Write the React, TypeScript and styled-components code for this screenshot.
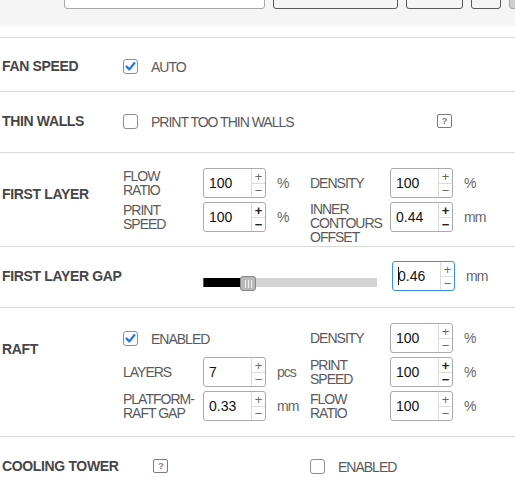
import React from 'react';
import styled, { createGlobalStyle } from 'styled-components';

const GlobalStyle = createGlobalStyle`
  html, body {
    margin: 0;
    padding: 0;
    background: #fff;
  }
  * {
    box-sizing: border-box;
  }
`;

// ANCHOR Page
const Page = styled.div`
  width: 515px;
  height: 478px;
  overflow: hidden;
  font-family: 'Liberation Sans', Arial, sans-serif;
  color: #666;
`;

// ANCHOR Toolbar (cut off at the top of the window)
const Toolbar = styled.div`
  height: 26px;
  background: #f5f5f5;
  display: flex;
  align-items: flex-start;
  gap: 8px;
  padding-left: 64px;
  overflow: hidden;
`;

type ToolVariant = 'field' | 'outline' | 'filled';

const ToolButton = styled.div<{ $w: number; $variant: ToolVariant }>`
  flex: none;
  width: ${(p) => p.$w}px;
  height: 30px;
  margin-top: -21px;
  border-radius: 3px;
  border: 1px solid
    ${(p) => (p.$variant === 'outline' ? '#5a5a5a' : '#a8a8a8')};
  background: ${(p) =>
    p.$variant === 'field'
      ? '#fff'
      : p.$variant === 'filled'
      ? '#cfcfcf'
      : '#f5f5f5'};
`;

// ANCHOR Sections
const List = styled.div`
  margin-top: 11px;
  border-top: 1px solid #d9d9d9;
`;

const Section = styled.div<{ $pt: number; $pb: number }>`
  display: flex;
  align-items: flex-start;
  padding: ${(p) => p.$pt}px 0 ${(p) => p.$pb}px;
  border-bottom: 1px solid #d9d9d9;
`;

const Title = styled.div<{ $pt?: number; $center?: boolean }>`
  flex: none;
  width: 123px;
  padding-left: 2px;
  padding-top: ${(p) => p.$pt ?? 0}px;
  align-self: ${(p) => (p.$center ? 'center' : 'flex-start')};
  font-size: 14px;
  line-height: 16px;
  font-weight: bold;
  letter-spacing: -0.35px;
  color: #464646;
  white-space: nowrap;
`;

const Inline = styled.div<{ $h: number }>`
  display: flex;
  align-items: center;
  height: ${(p) => p.$h}px;
`;

const FieldGrid = styled.div`
  display: grid;
  grid-template-columns: 80px 63px 44px 80px 63px auto;
  grid-auto-rows: 30px;
  row-gap: 4px;
`;

const FieldLabel = styled.div`
  display: flex;
  align-items: safe center;
  height: 30px;
  font-size: 14px;
  line-height: 14px;
  letter-spacing: -1px;
  color: #5a5a5a;
`;

const Unit = styled.div`
  display: flex;
  align-items: center;
  padding-left: 11px;
  font-size: 14px;
  letter-spacing: -1px;
  color: #666;
`;

// ANCHOR Checkbox
const CheckField = styled.label<{ $w?: number; $span?: string }>`
  display: flex;
  align-items: center;
  gap: 13px;
  width: ${(p) => (p.$w ? `${p.$w}px` : 'auto')};
  grid-column: ${(p) => p.$span ?? 'auto'};
  font-size: 14px;
  letter-spacing: -1px;
  color: #5a5a5a;
  white-space: nowrap;
`;

const CheckText = styled.span`
  padding-top: 1px;
`;

const CheckBox = ({ checked }: { checked?: boolean }) => (
  <svg width="15" height="15" viewBox="0 0 15 15" style={{ flex: 'none' }}>
    <rect
      x="0.5"
      y="0.5"
      width="14"
      height="14"
      rx="2.5"
      fill="#fff"
      stroke="#8c8c8c"
    />
    {checked && (
      <path
        d="M3.6 7.6 L6.3 10.4 L11.4 4.1"
        fill="none"
        stroke="#2b7de9"
        strokeWidth="2.4"
        strokeLinecap="round"
        strokeLinejoin="round"
      />
    )}
  </svg>
);

// ANCHOR Help badge
const HelpBox = styled.span<{ $ml?: number }>`
  display: inline-flex;
  align-items: center;
  justify-content: center;
  width: 15px;
  height: 14px;
  margin-left: ${(p) => p.$ml ?? 0}px;
  border: 1px solid #7b7b7b;
  border-radius: 2px;
  font-size: 9px;
  font-weight: bold;
  color: #7b7b7b;
  line-height: 1;
`;

// ANCHOR Spin input
const SpinBox = styled.div<{ $focus?: boolean }>`
  display: flex;
  width: 63px;
  height: 30px;
  border: 1px solid ${(p) => (p.$focus ? '#3f8ee6' : '#aaaaaa')};
  border-radius: 3px;
  background: #fff;
  overflow: hidden;
`;

const SpinValue = styled.div`
  flex: 1;
  display: flex;
  align-items: center;
  padding-left: 5px;
  font-size: 14px;
  color: #111;
`;

const Caret = styled.span`
  display: inline-block;
  width: 1px;
  height: 18px;
  margin-right: -1px;
  background: #000;
`;

const SpinButtons = styled.div`
  flex: none;
  width: 14px;
  display: grid;
  grid-template-rows: 1fr 1fr;
  border-left: 1px solid #dcdcdc;
`;

const SpinBtn = styled.div<{ $strong?: boolean }>`
  display: flex;
  align-items: center;
  justify-content: center;
  font-size: 13px;
  line-height: 1;
  font-weight: ${(p) => (p.$strong ? 'bold' : 'normal')};
  color: ${(p) => (p.$strong ? '#222' : '#6a6a6a')};

  & + & {
    border-top: 1px solid #dcdcdc;
  }
`;

const Spin = ({
  value,
  strong,
  focus,
}: {
  value: string;
  strong?: boolean;
  focus?: boolean;
}) => (
  <SpinBox $focus={focus}>
    <SpinValue>
      {focus && <Caret />}
      {value}
    </SpinValue>
    <SpinButtons>
      <SpinBtn $strong={strong}>+</SpinBtn>
      <SpinBtn $strong={strong}>−</SpinBtn>
    </SpinButtons>
  </SpinBox>
);

// ANCHOR Slider
const SliderRow = styled.div`
  display: flex;
  align-items: center;
  height: 30px;
  padding-left: 80px;
`;

const SliderBox = styled.div`
  width: 174px;
  height: 30px;
  margin-right: 15px;
  display: flex;
  align-items: flex-end;
  padding-bottom: 4px;
`;

const SliderTrack = styled.div`
  position: relative;
  width: 100%;
  height: 9px;
  background: #d3d3d3;
`;

const SliderFill = styled.div<{ $w: number }>`
  width: ${(p) => p.$w}px;
  height: 100%;
  background: #000;
  border-left: 1px solid #555;
`;

const SliderThumb = styled.div<{ $left: number }>`
  position: absolute;
  top: -2px;
  left: ${(p) => p.$left}px;
  width: 16px;
  height: 15px;
  border: 1px solid #858585;
  border-radius: 3px;
  background: #b8b8b8;
  display: flex;
  justify-content: center;
  align-items: center;
  gap: 2px;

  span {
    width: 1px;
    height: 8px;
    background: #f0f0f0;
  }
`;

export default function App() {
  return (
    <Page>
      <GlobalStyle />
      <Toolbar>
        <ToolButton $w={201} $variant="field" />
        <ToolButton $w={125} $variant="outline" />
        <ToolButton $w={57} $variant="outline" />
        <ToolButton $w={30} $variant="outline" />
        <ToolButton $w={20} $variant="filled" />
      </Toolbar>

      <List>
        <Section $pt={20} $pb={17}>
          <Title>FAN SPEED</Title>
          <Inline $h={16}>
            <CheckField>
              <CheckBox checked />
              <CheckText>AUTO</CheckText>
            </CheckField>
          </Inline>
        </Section>

        <Section $pt={21} $pb={23}>
          <Title>THIN WALLS</Title>
          <Inline $h={16}>
            <CheckField $w={314}>
              <CheckBox />
              <CheckText>PRINT TOO THIN WALLS</CheckText>
            </CheckField>
            <HelpBox>?</HelpBox>
          </Inline>
        </Section>

        <Section $pt={15} $pb={14}>
          <Title $pt={18}>FIRST LAYER</Title>
          <FieldGrid>
            <FieldLabel>
              FLOW
              <br />
              RATIO
            </FieldLabel>
            <Spin value="100" />
            <Unit>%</Unit>
            <FieldLabel>DENSITY</FieldLabel>
            <Spin value="100" />
            <Unit>%</Unit>

            <FieldLabel>
              PRINT
              <br />
              SPEED
            </FieldLabel>
            <Spin value="100" strong />
            <Unit>%</Unit>
            <FieldLabel>
              INNER
              <br />
              CONTOURS
              <br />
              OFFSET
            </FieldLabel>
            <Spin value="0.44" strong />
            <Unit>mm</Unit>
          </FieldGrid>
        </Section>

        <Section $pt={14} $pb={16}>
          <Title $center>FIRST LAYER GAP</Title>
          <SliderRow>
            <SliderBox>
              <SliderTrack>
                <SliderFill $w={38} />
                <SliderThumb $left={37}>
                  <span />
                  <span />
                  <span />
                </SliderThumb>
              </SliderTrack>
            </SliderBox>
            <Spin value="0.46" focus />
            <Unit>mm</Unit>
          </SliderRow>
        </Section>

        <Section $pt={15} $pb={15}>
          <Title $pt={18}>RAFT</Title>
          <FieldGrid>
            <CheckField $span="1 / span 3">
              <CheckBox checked />
              <CheckText>ENABLED</CheckText>
            </CheckField>
            <FieldLabel>DENSITY</FieldLabel>
            <Spin value="100" />
            <Unit>%</Unit>

            <FieldLabel>LAYERS</FieldLabel>
            <Spin value="7" />
            <Unit>pcs</Unit>
            <FieldLabel>
              PRINT
              <br />
              SPEED
            </FieldLabel>
            <Spin value="100" strong />
            <Unit>%</Unit>

            <FieldLabel>
              PLATFORM-
              <br />
              RAFT GAP
            </FieldLabel>
            <Spin value="0.33" />
            <Unit>mm</Unit>
            <FieldLabel>
              FLOW
              <br />
              RATIO
            </FieldLabel>
            <Spin value="100" />
            <Unit>%</Unit>
          </FieldGrid>
        </Section>

        <Section $pt={21} $pb={20}>
          <Title>COOLING TOWER</Title>
          <Inline $h={16}>
            <CheckField $w={187}>
              <HelpBox $ml={30}>?</HelpBox>
            </CheckField>
            <CheckField>
              <CheckBox />
              <CheckText>ENABLED</CheckText>
            </CheckField>
          </Inline>
        </Section>
      </List>
    </Page>
  );
}
